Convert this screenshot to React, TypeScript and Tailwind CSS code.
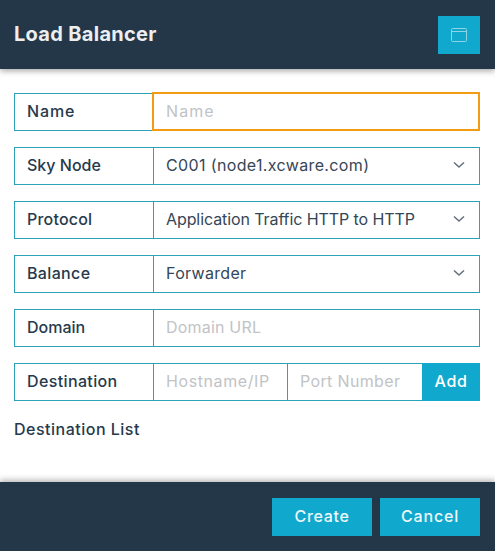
import React from "react";

const ff = "font-['Inter','Liberation_Sans',sans-serif]";

function Label({ children, className = "" }: { children: React.ReactNode; className?: string }) {
  return (
    <div className={`w-[139px] shrink-0 flex items-center pl-3 pb-[2px] border-r border-[#2ba3bb] text-[16px] font-medium text-[#263a4c] ${className}`}>
      {children}
    </div>
  );
}

function Row({ children }: { children: React.ReactNode }) {
  return <div className="flex h-[38px] border border-[#2ba3bb] bg-white">{children}</div>;
}

function Field({ placeholder, className = "" }: { placeholder: string; className?: string }) {
  return (
    <input
      placeholder={placeholder}
      className={`min-w-0 pl-3 pb-[2px] text-[16px] outline-none bg-white placeholder:text-[#c1c3c6] ${className}`}
    />
  );
}

function Select({ value, className = "" }: { value: string; className?: string }) {
  return (
    <div className="flex-1 flex items-center justify-between pl-3 pr-[14px] pb-[2px] text-[16px] text-[#354656]">
      <span className={className}>{value}</span>
      <svg width="12" height="12" viewBox="0 0 12 12" fill="none" stroke="#66727f" strokeWidth="1.6">
        <path d="M1 3.5 L6 8 L11 3.5" />
      </svg>
    </div>
  );
}

export default function App() {
  return (
    <div className={`w-[495px] h-[551px] flex flex-col bg-white overflow-hidden ${ff}`}>
      <header className="h-[69px] shrink-0 flex items-center justify-between pl-[14px] pr-[15px] bg-[#233749] shadow-[0_2px_6px_rgba(0,0,0,0.35)] z-10">
        <h1 className="text-[20px] font-bold tracking-[0.3px] text-[#eceef0] pb-[2px]">Load Balancer</h1>
        <button className="w-[42px] h-[38px] flex items-center justify-center bg-[#10a9cd]">
          <svg width="16" height="14" viewBox="0 0 16 14" fill="none" stroke="#8ed4e6" strokeWidth="1">
            <rect x="0.5" y="0.5" width="15" height="13" rx="1" />
            <path d="M0.5 3.5 H15.5" />
          </svg>
        </button>
      </header>

      <main className="flex-1 flex flex-col gap-4 pt-6 pl-[14px] pr-[15px]">
        <div className="flex h-[38px] border border-[#2ba3bb] bg-white relative">
          <Label className="tracking-[0.85px]">Name</Label>
          <Field placeholder="Name" className="absolute left-[137px] right-[-1px] top-[-2px] bottom-[-1px] border-2 border-[#f39c12] tracking-[1.1px]" />
        </div>
        <Row><Label>Sky Node</Label><Select value="C001 (node1.xcware.com)" className="tracking-[0.36px]" /></Row>
        <Row><Label className="tracking-[0.2px]">Protocol</Label><Select value="Application Traffic HTTP to HTTP" className="tracking-[-0.09px]" /></Row>
        <Row><Label className="tracking-[0.35px]">Balance</Label><Select value="Forwarder" className="tracking-[0.32px]" /></Row>
        <Row><Label>Domain</Label><Field placeholder="Domain URL" className="flex-1 tracking-[0.2px]" /></Row>
        <div className="flex h-[38px] border border-[#2ba3bb] border-r-0 bg-white">
          <Label className="tracking-[0.37px]">Destination</Label>
          <Field placeholder="Hostname/IP" className="w-[134px] shrink-0 border-r border-[#2ba3bb] tracking-[0.6px]" />
          <Field placeholder="Port Number" className="flex-1 tracking-[0.35px]" />
          <button className="w-[58px] shrink-0 bg-[#10a9cd] text-white text-[16px] font-medium tracking-[0.6px] pb-[2px] -my-px">Add</button>
        </div>
        <div className="text-[16px] font-medium text-[#263a4c] leading-6 tracking-[0.5px]">Destination List</div>
      </main>

      <footer className="h-[69px] shrink-0 flex items-center justify-end gap-2 pr-[15px] bg-[#233749] shadow-[0_-2px_6px_rgba(0,0,0,0.3)] z-10">
        <button className="w-[100px] h-[38px] pb-[2px] bg-[#10a9cd] text-[#eef7fa] text-[16px] font-medium tracking-[0.66px]">Create</button>
        <button className="w-[100px] h-[38px] pb-[2px] bg-[#10a9cd] text-[#eef7fa] text-[16px] font-medium tracking-[0.83px]">Cancel</button>
      </footer>
    </div>
  );
}
